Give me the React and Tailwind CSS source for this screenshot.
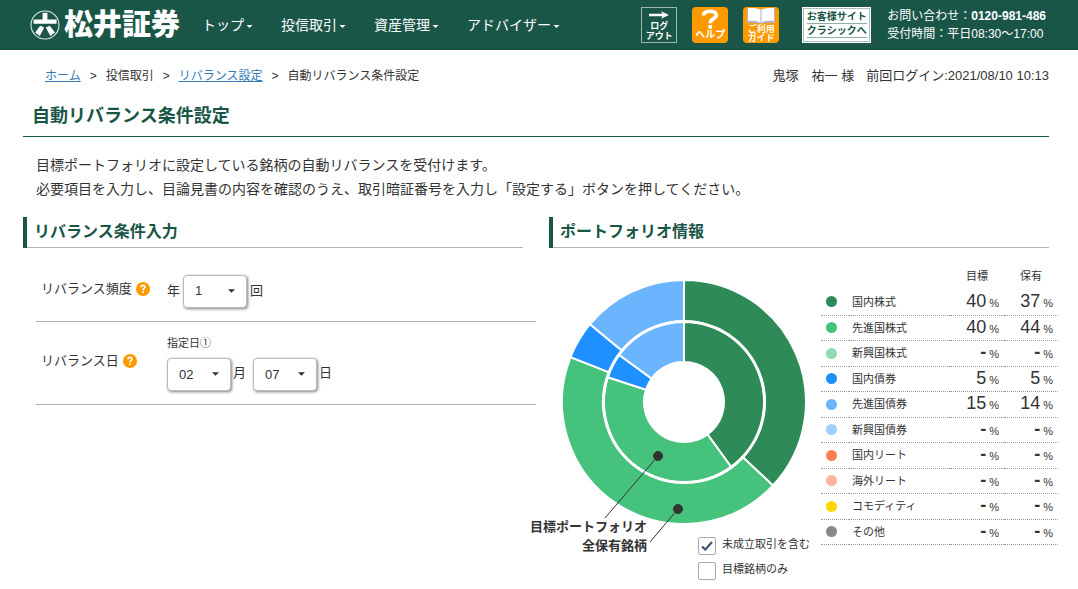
import React from "react";

const NAV = ["トップ", "投信取引", "資産管理", "アドバイザー"];

const ASSETS = [
  { name: "国内株式", color: "#2e8b57", target: 40, held: 37 },
  { name: "先進国株式", color: "#45c27c", target: 40, held: 44 },
  { name: "新興国株式", color: "#90dcb0", target: 0, held: 0 },
  { name: "国内債券", color: "#1e90ff", target: 5, held: 5 },
  { name: "先進国債券", color: "#6bb5ff", target: 15, held: 14 },
  { name: "新興国債券", color: "#9ecfff", target: 0, held: 0 },
  { name: "国内リート", color: "#ff7f50", target: 0, held: 0 },
  { name: "海外リート", color: "#ffb59b", target: 0, held: 0 },
  { name: "コモディティ", color: "#ffd700", target: 0, held: 0 },
  { name: "その他", color: "#888888", target: 0, held: 0 },
];

const CX = 151;
const CY = 134;

function point(radius, share) {
  const angle = (share / 100) * Math.PI * 2;
  return `${(CX + radius * Math.sin(angle)).toFixed(2)} ${(CY - radius * Math.cos(angle)).toFixed(2)}`;
}

function ringSlices(field, inner, outer) {
  let start = 0;
  return ASSETS.filter((a) => a[field] > 0).map((a) => {
    const end = start + a[field];
    const large = a[field] > 50 ? 1 : 0;
    const d = `M${point(outer, start)} A${outer} ${outer} 0 ${large} 1 ${point(outer, end)} L${point(inner, end)} A${inner} ${inner} 0 ${large} 0 ${point(inner, start)} Z`;
    start = end;
    return <path key={a.name} d={d} fill={a.color} stroke="#fff" strokeWidth="2" />;
  });
}

function Caret({ className }) {
  return (
    <svg viewBox="0 0 8 4" className={className} aria-hidden="true">
      <path d="M0 0H8L4 4Z" fill="currentColor" />
    </svg>
  );
}

function Logo() {
  return (
    <a href="#" className="flex items-center gap-1 text-white">
      <svg viewBox="0 0 30 30" className="size-[30px]" aria-hidden="true">
        <circle cx="15" cy="15" r="14" fill="none" stroke="#dfe9e6" strokeWidth="1.1" />
        <path
          d="M12.6 2.800H17.400V9.400H26.600V13.700H3.600V9.400H12.600Z M10.200 15.800L14.200 17.600L9.800 26L5.200 22.400Z M19.800 15.800L15.800 17.600L20.400 26L25 22.400Z"
          fill="#fff"
        />
      </svg>
      <span className="text-[29px] leading-8 font-black">松井証券</span>
    </a>
  );
}

function Header() {
  return (
    <header className="flex h-[50px] items-center justify-between border-b border-[#154a3c] bg-[#1a5648] pr-8 pl-[30px] text-white">
      <div className="flex items-center gap-[22px]">
        <Logo />
        <nav className="flex gap-7 text-[14px] leading-5">
          {NAV.map((item) => (
            <a key={item} href="#" className="flex items-center gap-0.5 whitespace-nowrap">
              {item}
              <Caret className="mt-1 h-[3px] w-[7px]" />
            </a>
          ))}
        </nav>
      </div>
      <div className="flex items-center gap-4">
        <div className="flex gap-[15px] pr-[7px]">
          <button className="flex h-9 w-9 flex-col items-center border border-[#9db8b0] pt-[3px] text-[9px] leading-[10px] font-bold">
            <svg viewBox="0 0 20 8" className="h-2 w-5 shrink-0" aria-hidden="true">
              <path d="M0 2.800H13.500L12 .3L20 4L12 7.700L13.500 5.200H0Z" fill="#fff" />
            </svg>
            <span className="mt-0.5 whitespace-nowrap">ログ</span>
            <span className="whitespace-nowrap">アウト</span>
          </button>
          <button className="flex h-9 w-9 flex-col items-center rounded bg-[#ff9900] pt-[2px] text-[10px] leading-[11px] font-bold">
            <svg viewBox="0 0 18 20" className="h-5 w-[18px] shrink-0" aria-hidden="true">
              <path d="M2.500 6.600C2.500 3.500 5.200 2.200 9 2.200C13 2.200 15.300 3.700 15.300 6.300C15.300 9.800 9.200 9.500 9.200 14.200" fill="none" stroke="#fff" strokeWidth="3.600" />
              <rect x="7.300" y="16" width="3.800" height="3.700" fill="#fff" />
            </svg>
            <span className="whitespace-nowrap">ヘルプ</span>
          </button>
          <button className="flex h-9 w-9 flex-col items-center rounded bg-[#ff9900] pt-px text-[9px] leading-[9px] font-bold">
            <svg viewBox="0 0 28 16" className="h-4 w-7 shrink-0" aria-hidden="true">
              <path d="M0 1H28V15H17L14 16L11 15H0Z" fill="#b3b2c9" />
              <path d="M1 0C6-.2 11 0 14 2C17 0 22-.2 27 0V13C22 12.600 17 13 14 15C11 13 6 12.600 1 13Z" fill="#fff" />
              <path d="M14 2V15" stroke="#c9cad8" strokeWidth="1.500" />
            </svg>
            <span className="mt-px whitespace-nowrap">ご利用</span>
            <span className="whitespace-nowrap">ガイド</span>
          </button>
        </div>
        <a
          href="#"
          className="flex h-9 w-[69px] flex-col items-center justify-center gap-px border border-white bg-white text-[10px] leading-3 font-bold text-[#1a5648] outline-1 -outline-offset-2 outline-[#a9c0ba]"
        >
          <span className="border-b border-[#8fafa6] whitespace-nowrap">お客様サイト</span>
          <span className="border-b border-[#8fafa6] whitespace-nowrap">クラシックへ</span>
        </a>
        <div className="text-[12px] leading-[18px] whitespace-nowrap">
          <p>
            お問い合わせ：<b>0120-981-486</b>
          </p>
          <p>受付時間：平日08:30～17:00</p>
        </div>
      </div>
    </header>
  );
}

function SectionTitle({ children }) {
  return (
    <h2 className="flex h-[31px] items-center border-b border-b-[#b3b3b3] text-[16px] leading-6 font-bold text-[#1a5648]">
      <span className="-mb-px h-[31px] w-1 bg-[#1a5648]" />
      <span className="pl-[7px]">{children}</span>
    </h2>
  );
}

function HelpButton({ label }) {
  return (
    <button aria-label={label} className="shrink-0">
      <svg viewBox="0 0 14 14" className="size-3.5">
        <circle cx="7" cy="7" r="7" fill="#ff9900" />
        <path d="M5 5.300C5 4 5.900 3.400 7 3.400C8.200 3.400 9 4.100 9 5.100C9 6.500 7 6.600 7 8.300" fill="none" stroke="#fff" strokeWidth="1.700" />
        <rect x="6.100" y="9.300" width="1.800" height="1.700" fill="#fff" />
      </svg>
    </button>
  );
}

function Picker({ label, value, options }) {
  return (
    <span className="relative inline-block">
      <select
        aria-label={label}
        defaultValue={value}
        className="block h-[33px] w-16 appearance-none rounded border border-[#bbb] bg-white pl-[11px] text-[13px] text-[#333] shadow-[1px_1px_3px_rgba(0,0,0,0.5)]"
      >
        {options.map((o) => (
          <option key={o}>{o}</option>
        ))}
      </select>
      <Caret className="pointer-events-none absolute top-3.5 right-3 h-[4px] w-[7px]" />
    </span>
  );
}

const twoDigits = (count) => Array.from({ length: count }, (_, i) => String(i + 1).padStart(2, "0"));

function ConditionForm() {
  return (
    <section>
      <SectionTitle>リバランス条件入力</SectionTitle>
      <div className="mt-[13px] -mr-[13px] ml-[13px] text-[13px] leading-5">
        <div className="flex h-[61px] items-center border-b border-[#b3b3b3] pl-[5px]">
          <div className="flex w-[126px] items-center gap-1 pb-1 whitespace-nowrap">
            リバランス頻度
            <HelpButton label="リバランス頻度の説明" />
          </div>
          <div className="flex items-center gap-[3px]">
            年
            <Picker label="年間の回数" value="1" options={["1", "2", "3", "4", "6", "12"]} />
            回
          </div>
        </div>
        <div className="flex h-[83px] items-center border-b border-[#b3b3b3] pl-[5px]">
          <div className="flex w-[126px] items-center gap-1 pb-1 whitespace-nowrap">
            リバランス日
            <HelpButton label="リバランス日の説明" />
          </div>
          <div>
            <p className="mb-[7px] text-[11px] leading-4">指定日①</p>
            <div className="flex items-center gap-0.5">
              <Picker label="月" value="02" options={twoDigits(12)} />
              <span className="pb-1">月</span>
              <span className="pl-[5px]">
                <Picker label="日" value="07" options={twoDigits(31)} />
              </span>
              <span className="pb-1">日</span>
            </div>
          </div>
        </div>
      </div>
    </section>
  );
}

function DonutChart() {
  return (
    <svg viewBox="0 0 288 257" className="-ml-4 block h-[257px] w-[288px] overflow-visible" role="img" aria-label="ポートフォリオの構成比">
      {ringSlices("held", 81, 122)}
      {ringSlices("target", 40, 80)}
      <circle cx={CX} cy={CY} r="80.500" fill="none" stroke="#fff" strokeWidth="2.400" />
      <g stroke="#333" fill="#333">
        <path d="M125 188L72 250" />
        <path d="M145 241L117 274" />
        <circle cx="125" cy="188" r="4.500" />
        <circle cx="145" cy="241" r="4.500" />
      </g>
      <g className="text-[13px] font-bold" fill="#333" textAnchor="end">
        <text x="114" y="263">目標ポートフォリオ</text>
        <text x="114" y="282">全保有銘柄</text>
      </g>
    </svg>
  );
}

function CheckOption({ label, checked }) {
  return (
    <label className="flex items-center gap-1.5 text-[11px] leading-[18px] whitespace-nowrap">
      <span className="relative flex size-[18px]">
        <input
          type="checkbox"
          defaultChecked={checked}
          className="peer size-[18px] appearance-none rounded-[2px] border border-[#aaa] bg-white"
        />
        <svg viewBox="0 0 18 18" className="pointer-events-none absolute inset-0 hidden size-[18px] peer-checked:block" aria-hidden="true">
          <path d="M4 9.500L7.300 12.600L14 5" fill="none" stroke="#42567f" strokeWidth="2.200" />
        </svg>
      </span>
      <span className="-mt-1">{label}</span>
    </label>
  );
}

function Share({ value }) {
  return (
    <td className="border-b border-dotted border-[#999] p-0 pr-[5px] text-right align-middle">
      <span className="flex items-baseline justify-end gap-[3px] leading-5">
        <span className={value ? "text-[18px]" : "text-[18px] font-bold"}>{value || "-"}</span>
        <span className="text-[11px]">%</span>
      </span>
    </td>
  );
}

function AssetTable() {
  return (
    <table className="w-full table-fixed border-collapse text-[11px] leading-4">
      <colgroup>
        <col className="w-7" />
        <col />
        <col className="w-[54px]" />
        <col className="w-[54px]" />
      </colgroup>
      <thead>
        <tr className="h-[21px] align-top">
          <th className="p-0" />
          <th className="p-0" />
          <th className="p-0 pr-4 text-right font-normal">目標</th>
          <th className="p-0 pr-4 text-right font-normal">保有</th>
        </tr>
      </thead>
      <tbody>
        {ASSETS.map((a) => (
          <tr key={a.name} className="odd:h-[26px] even:h-[25px]">
            <td className="border-b border-dotted border-[#999] p-0 pl-[5px]">
              <span className="block size-[11px] rounded-full" style={{ backgroundColor: a.color }} />
            </td>
            <td className="border-b border-dotted border-[#999] p-0 pl-[3px] whitespace-nowrap">{a.name}</td>
            <Share value={a.target} />
            <Share value={a.held} />
          </tr>
        ))}
      </tbody>
    </table>
  );
}

function PortfolioInfo() {
  return (
    <section>
      <SectionTitle>ポートフォリオ情報</SectionTitle>
      <div className="-mr-[9px] flex pt-5">
        <div className="w-[272px] shrink-0">
          <DonutChart />
          <div className="mt-3 flex flex-col gap-[7px] pl-[149px]">
            <CheckOption label="未成立取引を含む" checked />
            <CheckOption label="目標銘柄のみ" />
          </div>
        </div>
        <div className="min-w-0 flex-1">
          <AssetTable />
        </div>
      </div>
    </section>
  );
}

export default function App() {
  return (
    <div className="bg-white font-['Liberation_Sans','Noto_Sans_CJK_JP',sans-serif] text-[#333]">
      <Header />
      <main className="pr-[29px] pl-[23px]">
        <div className="flex items-center justify-between pt-4 pl-[22px] text-[12px] leading-5 whitespace-nowrap">
          <nav aria-label="パンくず" className="flex gap-[9px]">
            <a href="#" className="text-[#337ab7] underline">ホーム</a>
            <span>&gt;</span>
            <span>投信取引</span>
            <span>&gt;</span>
            <a href="#" className="text-[#337ab7] underline">リバランス設定</a>
            <span>&gt;</span>
            <span>自動リバランス条件設定</span>
          </nav>
          <p className="flex gap-3 text-[13px]">
            <span>鬼塚　祐一 様</span>
            <span>前回ログイン:2021/08/10 10:13</span>
          </p>
        </div>
        <h1 className="mt-[17px] border-b border-[#1a5648] pb-1.5 pl-[9px] text-[18px] leading-[27px] font-bold text-[#1a5648]">
          自動リバランス条件設定
        </h1>
        <p className="mt-4 pl-[13px] text-[14px] leading-6">
          目標ポートフォリオに設定している銘柄の自動リバランスを受付けます。
          <br />
          必要項目を入力し、目論見書の内容を確認のうえ、取引暗証番号を入力し「設定する」ボタンを押してください。
        </p>
        <div className="mt-4 grid grid-cols-2 gap-[26px]">
          <ConditionForm />
          <PortfolioInfo />
        </div>
      </main>
    </div>
  );
}
